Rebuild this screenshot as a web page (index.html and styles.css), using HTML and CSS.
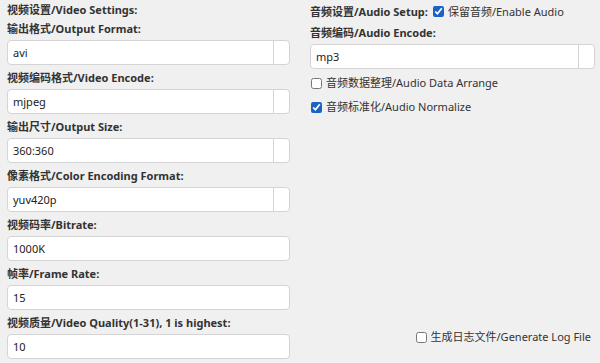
FILE: index.html
```html
<!DOCTYPE html>
<html lang="zh-CN">
<head>
  <meta charset="UTF-8" />
  <title>Settings</title>
  <link rel="stylesheet" href="styles.css">
</head>
<body>
  <div class="panel">
    <div class="col video">
      <div class="heading">视频设置/Video Settings:</div>

      <label class="field-label">输出格式/Output Format:</label>
      <div class="combo"><input type="text" value="avi"><span class="drop"></span></div>

      <label class="field-label">视频编码格式/Video Encode:</label>
      <div class="combo"><input type="text" value="mjpeg"><span class="drop"></span></div>

      <label class="field-label">输出尺寸/Output Size:</label>
      <div class="combo"><input type="text" value="360:360"><span class="drop"></span></div>

      <label class="field-label">像素格式/Color Encoding Format:</label>
      <div class="combo"><input type="text" value="yuv420p"><span class="drop"></span></div>

      <label class="field-label">视频码率/Bitrate:</label>
      <input class="text-input" type="text" value="1000K">

      <label class="field-label">帧率/Frame Rate:</label>
      <input class="text-input" type="text" value="15">

      <label class="field-label">视频质量/Video Quality(1-31), 1 is highest:</label>
      <input class="text-input" type="text" value="10">
    </div>

    <div class="col audio">
      <div class="heading-row">
        <span class="heading">音频设置/Audio Setup:</span>
        <label class="check"><input type="checkbox" checked> 保留音频/Enable Audio</label>
      </div>

      <label class="field-label">音频编码/Audio Encode:</label>
      <div class="combo"><input type="text" value="mp3"><span class="drop"></span></div>

      <label class="check row first"><input type="checkbox"> 音频数据整理/Audio Data Arrange</label>
      <label class="check row"><input type="checkbox" checked> 音频标准化/Audio Normalize</label>

      <label class="check log"><input type="checkbox"> 生成日志文件/Generate Log File</label>
    </div>
  </div>
</body>
</html>
```

FILE: styles.css
```css
:root {
  --bg: #f0f0f0;
  --text: #333;
  --border: #d4d4d4;
  --blue: #1a63c6;
}
body {
  margin: 0;
  background: var(--bg);
  font-family: 'Noto Sans', 'Noto Sans CJK SC', sans-serif;
  font-size: 11px;
  color: var(--text);
}
.panel {
  display: flex;
  height: 363px;
  box-sizing: border-box;
  padding: 2px 5px 0 7px;
  gap: 20px;
}
.col {
  display: flex;
  flex-direction: column;
}
.video {
  width: 283px;
}
.audio {
  flex: 1;
}
.heading {
  font-weight: bold;
  line-height: 16px;
}
.heading-row {
  display: flex;
  align-items: center;
  gap: 4px;
  height: 19px;
}
.field-label {
  display: block;
  font-weight: bold;
  line-height: 16px;
  margin: 5px 0 3px;
}
.heading + .field-label {
  margin-top: 3px;
}
.audio .field-label {
  margin-top: 4px;
}
.combo {
  display: flex;
  height: 25px;
  box-sizing: border-box;
  border: 1px solid var(--border);
  border-radius: 4px;
  background: #fff;
  overflow: hidden;
}
.combo input {
  flex: 1;
  min-width: 0;
  border: none;
  outline: none;
  padding: 0 5px;
  font: inherit;
  color: #222;
  background: transparent;
}
.drop {
  width: 15px;
  border-left: 1px solid var(--border);
}
.text-input {
  height: 25px;
  box-sizing: border-box;
  border: 1px solid var(--border);
  border-radius: 4px;
  background: #fff;
  padding: 0 5px;
  font: inherit;
  color: #222;
  outline: none;
}
.check {
  display: flex;
  align-items: center;
  gap: 3px;
  height: 16px;
  line-height: 16px;
}
.check input {
  width: 11px;
  height: 11px;
  margin: 0 1px;
  accent-color: var(--blue);
}
.check.row {
  margin-top: 8px;
}
.check.row.first {
  margin-top: 6px;
}
.log {
  margin-top: auto;
  margin-bottom: 18px;
  align-self: flex-end;
  margin-right: 4px;
}
```
